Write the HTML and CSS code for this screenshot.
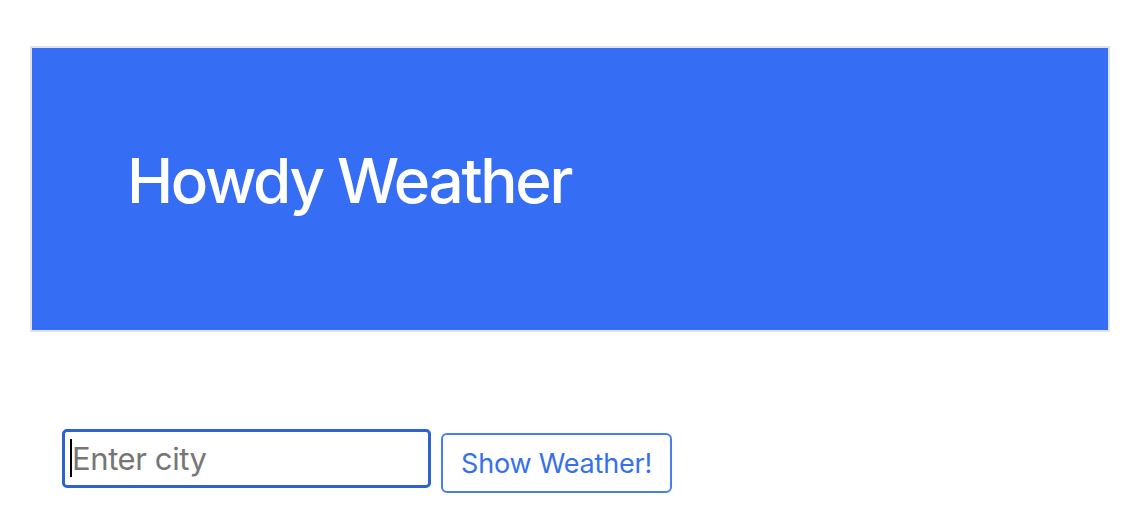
FILE: index.html
```html
<!DOCTYPE html>
<html lang="en">
<head>
<meta charset="utf-8">
<title>Howdy Weather</title>
<link rel="stylesheet" href="styles.css">
</head>
<body>
<header class="hero">
  <h1 class="hero-title">Howdy Weather</h1>
</header>
<form class="search">
  <div class="city-field"><span class="caret"></span><input class="city-input" type="text" placeholder="Enter city"></div>
  <button class="show-btn" type="button">Show Weather!</button>
</form>
</body>
</html>
```
FILE: styles.css
```css
html, body {
  margin: 0;
  padding: 0;
  background: #ffffff;
}
body {
  padding: 46px 32px 0 30px;
  font-family: Inter, "Liberation Sans", Arial, sans-serif;
}
.hero {
  border: 2px solid #dfe3e8;
  background: #356ef5;
  padding: 96px 95px;
}
.hero-title {
  margin: 0 0 16px 0;
  color: #ffffff;
  font-size: 62px;
  font-weight: 500;
  letter-spacing: -2.3px;
  line-height: 1.2;
}
.search {
  display: flex;
  align-items: flex-start;
  gap: 10px;
  margin-top: 97px;
  padding-left: 32px;
}
.city-field {
  position: relative;
  display: flex;
}
.caret {
  position: absolute;
  left: 8px;
  top: 10px;
  width: 2px;
  height: 38px;
  background: #000;
}
.city-input {
  box-sizing: border-box;
  width: 369px;
  height: 59px;
  border: 3px solid #2d63cf;
  border-radius: 5px;
  padding: 0 5px 0 7px;
  font-family: Inter, "Liberation Sans", Arial, sans-serif;
  font-size: 31px;
  letter-spacing: -0.4px;
  color: #222;
  outline: none;
  background: #fff;
}
.city-input::placeholder {
  color: #767676;
}
.show-btn {
  box-sizing: border-box;
  margin-top: 4px;
  width: 231px;
  height: 60px;
  border: 2px solid #4a7ef0;
  border-radius: 6px;
  background: #fff;
  color: #3570ed;
  font-family: Inter, "Liberation Sans", Arial, sans-serif;
  font-size: 27px;
  letter-spacing: -0.2px;
  padding: 0;
  cursor: pointer;
}
```
